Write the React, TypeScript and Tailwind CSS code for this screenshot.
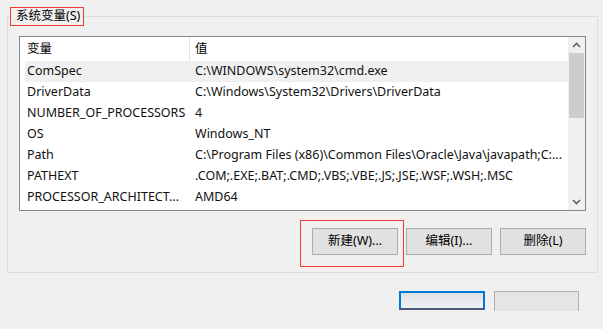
const rows: [string, string][] = [
  ['ComSpec', 'C:\\WINDOWS\\system32\\cmd.exe'],
  ['DriverData', 'C:\\Windows\\System32\\Drivers\\DriverData'],
  ['NUMBER_OF_PROCESSORS', '4'],
  ['OS', 'Windows_NT'],
  ['Path', 'C:\\Program Files (x86)\\Common Files\\Oracle\\Java\\javapath;C:...'],
  ['PATHEXT', '.COM;.EXE;.BAT;.CMD;.VBS;.VBE;.JS;.JSE;.WSF;.WSH;.MSC'],
  ['PROCESSOR_ARCHITECT...', 'AMD64'],
];

function WinButton({ label }: { label: string }) {
  return (
    <div className="flex h-[27px] w-[86px] items-center justify-center border border-[#adadad] bg-[#e1e1e1] text-[12.5px] text-black">
      {label}
    </div>
  );
}

export default function App() {
  return (
    <div
      className="h-[329px] w-[603px] overflow-hidden bg-[#f0f0f0] pt-[16px] pl-[7px] text-[12.5px] text-[#111]"
      style={{ fontFamily: '"Noto Sans", "Noto Sans CJK SC", sans-serif' }}
    >
      {/* group box */}
      <div className="relative h-[257px] w-[591px] border border-[#dcdcdc] pl-[11px] pt-[19px]">
        <div className="absolute top-[-10px] left-[2px] flex h-[19px] items-center border border-[#ee3a3a] bg-[#f0f0f0] pr-[3px] pl-[5px] leading-none text-black">
          系统变量(S)
        </div>

        {/* list view */}
        <div className="flex h-[175px] w-[567px] border border-[#828790] bg-white">
          <div className="flex flex-1 flex-col">
            <div className="flex h-[24px] items-center leading-none text-black">
              <div className="flex h-full w-[170px] items-center border-r border-[#e5e5e5] pl-[7px]">变量</div>
              <div className="pl-[5px]">值</div>
            </div>
            {rows.map(([name, value], i) => (
              <div
                key={name}
                className={`ml-[5px] flex h-[21px] items-center whitespace-nowrap leading-none ${i === 0 ? 'bg-[#f0f0f0]' : ''}`}
              >
                <div className="w-[165px] pl-[2px]">{name}</div>
                <div className="pl-[5px]">{value}</div>
              </div>
            ))}
          </div>
          {/* scrollbar */}
          <div className="flex w-[17px] flex-col bg-[#f0f0f0]">
            <div className="flex h-[16px] items-center justify-center">
              <svg width="9" height="6" viewBox="0 0 9 6">
                <path d="M1 5 L4.5 1.5 L8 5" fill="none" stroke="#606060" strokeWidth="1.6" />
              </svg>
            </div>
            <div className="mx-[1px] h-[65px] bg-[#cdcdcd]" />
            <div className="flex-1" />
            <div className="flex h-[16px] items-center justify-center">
              <svg width="9" height="6" viewBox="0 0 9 6">
                <path d="M1 1 L4.5 4.5 L8 1" fill="none" stroke="#606060" strokeWidth="1.6" />
              </svg>
            </div>
          </div>
        </div>

        {/* buttons */}
        <div className="mt-[17px] flex w-[567px] justify-end gap-[8px]">
          <div className="relative">
            <WinButton label="新建(W)..." />
            <div className="absolute top-[-8px] left-[-12px] h-[47px] w-[104px] border border-[#ee3a3a]" />
          </div>
          <WinButton label="编辑(I)..." />
          <WinButton label="删除(L)" />
        </div>
      </div>

      {/* dialog buttons */}
      <div className="mt-[18px] flex gap-[9px] pl-[392px]">
        <div className="h-[19px] w-[86px] border-2 border-b-[#4a5a78] border-[#0078d7] bg-gradient-to-b from-[#e1e1e1] to-[#eef2f8]" />
        <div className="h-[20px] w-[85px] border border-[#adadad] border-b-0 bg-[#e5e5e5]" />
      </div>
    </div>
  );
}
